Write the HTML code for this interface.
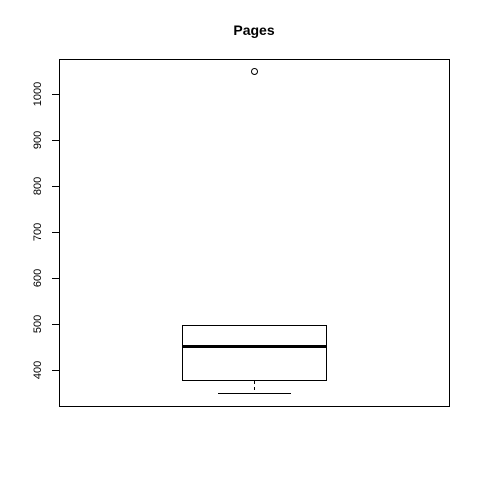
<!DOCTYPE html>
<html><head><style>html,body{margin:0;padding:0;background:#fff;}svg{display:block}</style></head>
<body>
<svg width="480" height="480" viewBox="0 0 480 480" xmlns="http://www.w3.org/2000/svg" font-family="Liberation Sans, sans-serif">
<rect width="480" height="480" fill="#fff"/>
<text x="254" y="35" font-size="14" font-weight="bold" text-anchor="middle">Pages</text>
<rect x="59.5" y="59.5" width="390" height="347" fill="none" stroke="#000" stroke-width="1"/>
<g stroke="#000" stroke-width="1">
<line x1="59.5" y1="94" x2="59.5" y2="370"/>
<line x1="52" y1="94.5" x2="59.5" y2="94.5"/>
<line x1="52" y1="140.5" x2="59.5" y2="140.5"/>
<line x1="52" y1="186.5" x2="59.5" y2="186.5"/>
<line x1="52" y1="232.5" x2="59.5" y2="232.5"/>
<line x1="52" y1="278.5" x2="59.5" y2="278.5"/>
<line x1="52" y1="324.5" x2="59.5" y2="324.5"/>
<line x1="52" y1="370.5" x2="59.5" y2="370.5"/>
</g>
<g font-size="11" text-anchor="middle" fill="#000">
<text transform="translate(41,94) rotate(-90)">1000</text>
<text transform="translate(41,140) rotate(-90)">900</text>
<text transform="translate(41,186) rotate(-90)">800</text>
<text transform="translate(41,232) rotate(-90)">700</text>
<text transform="translate(41,278) rotate(-90)">600</text>
<text transform="translate(41,324) rotate(-90)">500</text>
<text transform="translate(41,370) rotate(-90)">400</text>
</g>
<rect x="182.5" y="325.5" width="144" height="55" fill="none" stroke="#000"/>
<line x1="182" y1="346.5" x2="327" y2="346.5" stroke="#000" stroke-width="3"/>
<line x1="254.5" y1="381" x2="254.5" y2="393" stroke="#000" stroke-dasharray="3,3"/>
<line x1="218" y1="393.5" x2="291" y2="393.5" stroke="#000"/>
<circle cx="254.5" cy="71.5" r="3" fill="none" stroke="#000"/>
</svg>
</body></html>
